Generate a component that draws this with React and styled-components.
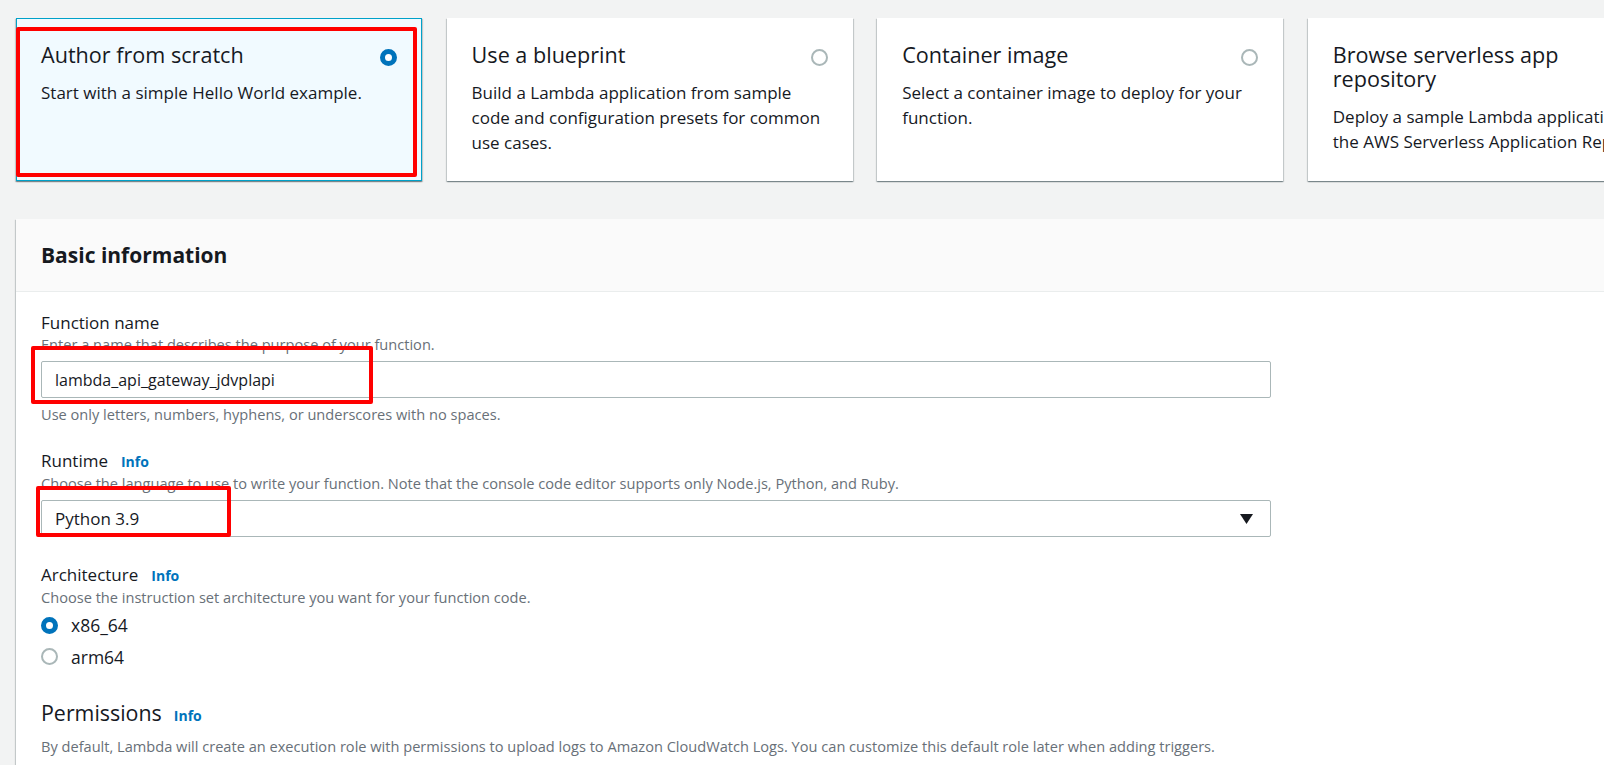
import React from 'react'
import styled, { createGlobalStyle } from 'styled-components'

const GlobalStyle = createGlobalStyle`
  html, body {
    margin: 0;
    padding: 0;
    background: #f2f3f3;
    overflow: hidden;
  }
  body {
    font-family: "Open Sans", "Noto Sans", sans-serif;
    color: #16191f;
  }
`

const Page = styled.div`
  width: 1800px;
  padding: 18px 0 0 16px;
`

const CardRow = styled.div`
  display: grid;
  grid-template-columns: repeat(4, 406px);
  column-gap: 24.6px;
`

const Card = styled.div`
  position: relative;
  box-sizing: border-box;
  height: 163px;
  padding: 24px;
  background: ${p => (p.selected ? '#f1faff' : '#ffffff')};
  border: 1px solid ${p => (p.selected ? '#00a1c9' : 'transparent')};
  box-shadow: 0 1px 1px 0 rgba(0, 28, 36, 0.3), 1px 1px 1px 0 rgba(0, 28, 36, 0.15),
    -1px 1px 1px 0 rgba(0, 28, 36, 0.15);
`

const CardHead = styled.div`
  display: flex;
  align-items: flex-start;
  gap: 16px;
`

const CardTitle = styled.div`
  flex: 1;
  font-size: 21.6px;
  line-height: 24px;
  padding-right: 30px;
`

const CardText = styled.div`
  margin-top: 13px;
  font-size: 17px;
  line-height: 25px;
`

const Radio = styled.span`
  flex: none;
  box-sizing: border-box;
  width: ${p => p.size || 16}px;
  height: ${p => p.size || 16}px;
  margin-top: ${p => p.offset || 0}px;
  border-radius: 50%;
  background: #fff;
  border: ${p => (p.checked ? '5px solid #0073bb' : '2px solid #aab7b8')};
`

const Highlight = styled.div`
  position: absolute;
  top: ${p => p.top}px;
  left: ${p => p.left}px;
  width: ${p => p.width}px;
  height: ${p => p.height}px;
  box-sizing: border-box;
  border: 4px solid #ff0000;
  border-radius: 2px;
  pointer-events: none;
`

const Panel = styled.section`
  margin-top: 38px;
  width: 1700px;
  background: #ffffff;
  box-shadow: 0 1px 1px 0 rgba(0, 28, 36, 0.3), 1px 1px 1px 0 rgba(0, 28, 36, 0.15),
    -1px 1px 1px 0 rgba(0, 28, 36, 0.15);
`

const PanelHeader = styled.header`
  background: #fafafa;
  border-bottom: 1px solid #eaeded;
  padding: 24px 25px;
`

const PanelTitle = styled.h2`
  margin: 0;
  font-size: 21px;
  line-height: 24px;
  font-weight: 700;
`

const PanelBody = styled.div`
  padding: 20px 25px 24px;
`

const Field = styled.div`
  position: relative;
  margin-top: ${p => p.gap || 0}px;
`

const LabelRow = styled.div`
  display: flex;
  align-items: baseline;
  gap: ${p => p.gap || 13}px;
  font-size: ${p => p.size || 17}px;
  line-height: ${p => p.lh || 22}px;
`

const Info = styled.a`
  font-size: 14px;
  font-weight: 700;
  color: #0073bb;
  text-decoration: none;
`

const Description = styled.div`
  font-size: 14.6px;
  line-height: 20px;
  color: #687078;
  margin-top: ${p => p.gap || 0}px;
`

const InputBox = styled.div`
  box-sizing: border-box;
  width: 1230px;
  height: 37px;
  margin-top: 7px;
  display: flex;
  align-items: center;
  justify-content: space-between;
  padding: 0 17px 0 13px;
  border: 1px solid #aab7b8;
  border-radius: 2px;
  background: #fff;
  font-size: 16px;
`

const Value = styled.span`
  font-size: ${p => p.size || 16}px;
`

const RadioList = styled.div`
  display: flex;
  flex-direction: column;
  gap: 7.5px;
  margin-top: 6px;
`

const RadioRow = styled.label`
  display: flex;
  align-items: center;
  gap: 13px;
  height: 24px;
  font-size: 17.5px;
`

const Caret = () => (
  <svg width="13" height="10" viewBox="0 0 13 10">
    <path d="M0 0 H13 L6.5 10 Z" fill="#16191f" />
  </svg>
)

const options = [
  { title: 'Author from scratch', text: 'Start with a simple Hello World example.', selected: true },
  {
    title: 'Use a blueprint',
    text: 'Build a Lambda application from sample code and configuration presets for common use cases.',
  },
  { title: 'Container image', text: 'Select a container image to deploy for your function.' },
  {
    title: 'Browse serverless app repository',
    text: 'Deploy a sample Lambda application from the AWS Serverless Application Repository.',
  },
]

export default function App() {
  return (
    <>
      <GlobalStyle />
      <Page>
        <CardRow>
          {options.map(o => (
            <Card key={o.title} selected={o.selected}>
              {o.selected && <Highlight top={8} left={-1} width={401} height={150} />}
              <CardHead>
                <CardTitle>{o.title}</CardTitle>
                <Radio checked={o.selected} size={17} offset={6} />
              </CardHead>
              <CardText>{o.text}</CardText>
            </Card>
          ))}
        </CardRow>

        <Panel>
          <PanelHeader>
            <PanelTitle>Basic information</PanelTitle>
          </PanelHeader>
          <PanelBody>
            <Field>
              <LabelRow>Function name</LabelRow>
              <Description>Enter a name that describes the purpose of your function.</Description>
              <InputBox>
                <Value>lambda_api_gateway_jdvplapi</Value>
              </InputBox>
              <Description gap={6}>Use only letters, numbers, hyphens, or underscores with no spaces.</Description>
              <Highlight top={34} left={-10} width={342} height={58} />
            </Field>

            <Field gap={26}>
              <LabelRow>
                <span>Runtime</span>
                <Info href="#">Info</Info>
              </LabelRow>
              <Description>
                Choose the language to use to write your function. Note that the console code editor supports only
                Node.js, Python, and Ruby.
              </Description>
              <InputBox>
                <Value size={17}>Python 3.9</Value>
                <Caret />
              </InputBox>
              <Highlight top={36} left={-5} width={195} height={51} />
            </Field>

            <Field gap={27}>
              <LabelRow>
                <span>Architecture</span>
                <Info href="#">Info</Info>
              </LabelRow>
              <Description>Choose the instruction set architecture you want for your function code.</Description>
              <RadioList>
                <RadioRow>
                  <Radio checked size={17} />
                  x86_64
                </RadioRow>
                <RadioRow>
                  <Radio size={17} />
                  arm64
                </RadioRow>
              </RadioList>
            </Field>

            <Field gap={30}>
              <LabelRow size={21.4} lh={28} gap={12}>
                <span>Permissions</span>
                <Info href="#">Info</Info>
              </LabelRow>
              <Description gap={6}>
                By default, Lambda will create an execution role with permissions to upload logs to Amazon CloudWatch
                Logs. You can customize this default role later when adding triggers.
              </Description>
            </Field>
          </PanelBody>
        </Panel>
      </Page>
    </>
  )
}
